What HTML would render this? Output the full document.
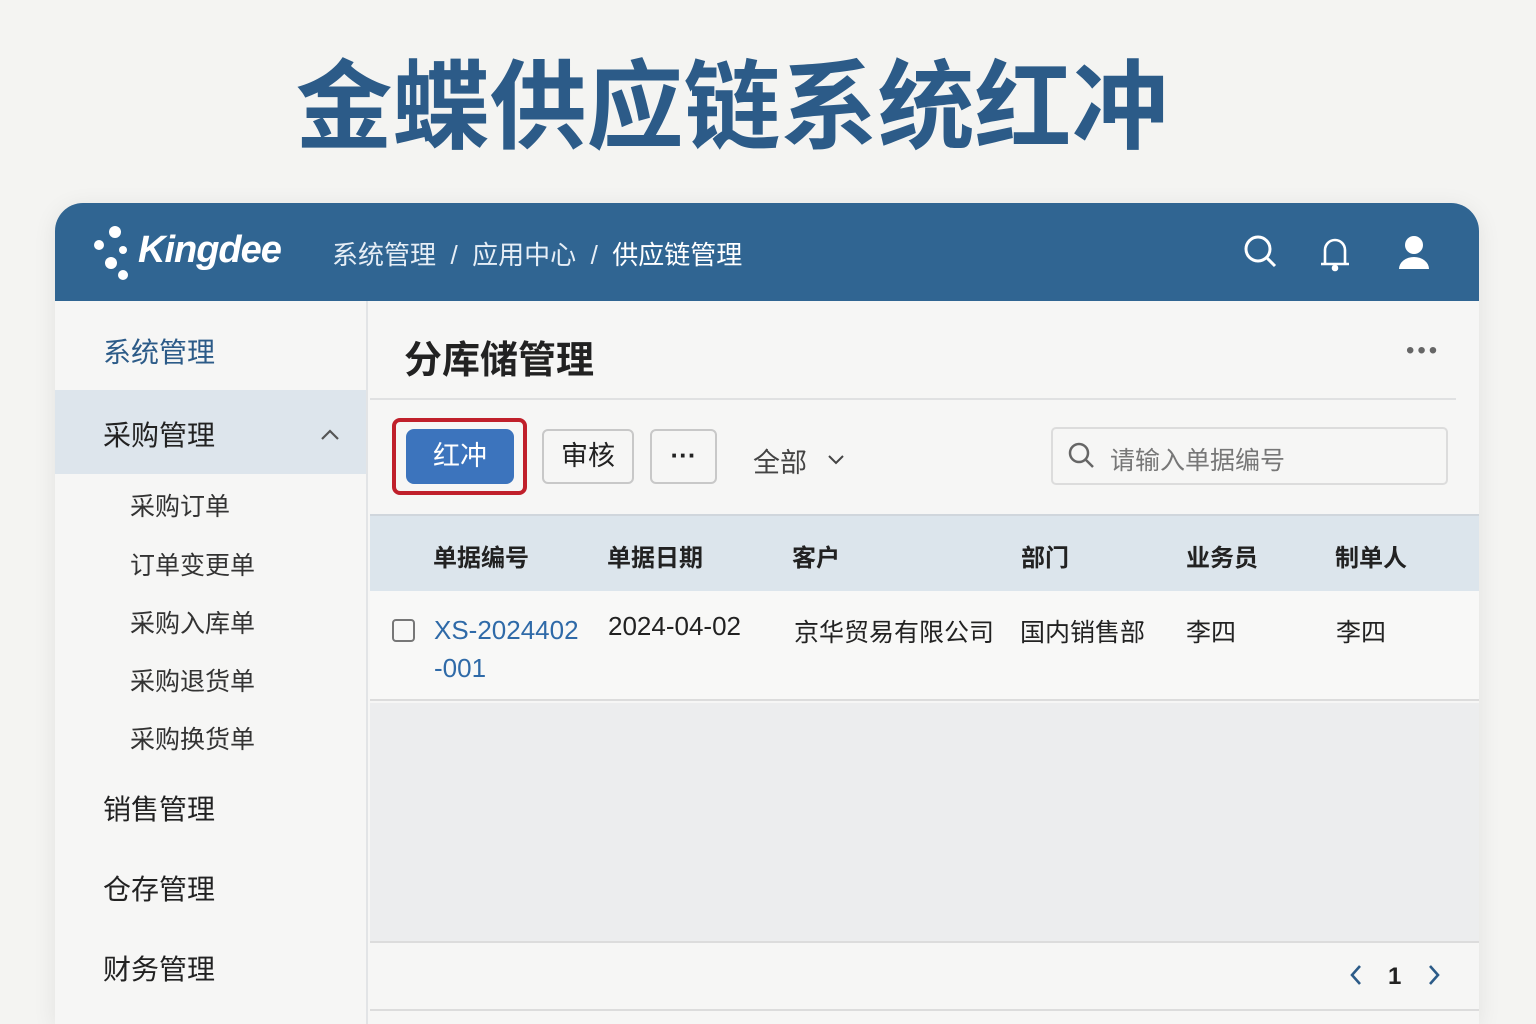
<!DOCTYPE html>
<html><head><meta charset="utf-8"><style>
*{margin:0;padding:0;box-sizing:border-box}
html,body{width:1536px;height:1024px;overflow:hidden}
body{background:#f4f4f2;font-family:"Liberation Sans","Noto Sans CJK SC",sans-serif;position:relative;color:#222}
.abs{position:absolute}
h1{position:absolute;left:0;width:1464px;top:48px;text-align:center;font-size:97px;font-weight:bold;color:#2c5b88;letter-spacing:0;line-height:120px}
.card{left:55px;top:203px;width:1424px;height:821px;border-radius:28px 28px 0 0;background:#f6f6f5;overflow:hidden;box-shadow:0 4px 24px rgba(0,0,0,.08)}
.hdr{left:0;top:0;width:1424px;height:98px;background:#306592;color:#fff}
.side{left:0;top:98px;width:313px;height:730px;background:#f6f6f5;border-right:2px solid #e2e4e6}
.si{position:absolute;left:48px;font-size:28px;color:#222}
.sub{position:absolute;left:75px;font-size:25px;color:#333}
.main{left:315px;top:98px;width:1109px;height:730px}
.th{position:absolute;top:22px;font-size:24px;font-weight:bold;color:#222}
.td{position:absolute;top:22px;font-size:25px;color:#222}
</style></head><body>
<h1>金蝶供应链系统红冲</h1>
<div class="abs card">
 <div class="abs hdr">
  <svg class="abs" style="left:38px;top:20px" width="40" height="60"><circle cx="22" cy="9" r="6" fill="#fff"/><circle cx="6" cy="22" r="5" fill="#fff"/><circle cx="18" cy="40" r="6" fill="#fff"/><circle cx="30" cy="52" r="5" fill="#fff"/><circle cx="30" cy="27" r="4" fill="#fff"/></svg>
  <div class="abs" style="left:83px;top:26px;font-size:38px;font-weight:bold;font-style:italic;letter-spacing:-1px">Kingdee</div>
  <div class="abs" style="left:277px;top:32px;font-size:26px;color:#e6eef6">系统管理 &nbsp;/&nbsp; 应用中心 &nbsp;/&nbsp; <span style="color:#fff">供应链管理</span></div>
  <svg class="abs" style="left:1188px;top:31px" width="36" height="36" fill="none" stroke="#fff" stroke-width="3"><circle cx="15" cy="15" r="12"/><path d="M24 24l8 8"/></svg>
  <svg class="abs" style="left:1264px;top:30px" width="32" height="40" fill="none" stroke="#fff" stroke-width="2.6"><path d="M6 30V17a10 10 0 0 1 20 0v13M2 31h28"/><circle cx="16" cy="35" r="2" fill="#fff"/></svg>
  <svg class="abs" style="left:1342px;top:32px" width="34" height="34" fill="#fff"><circle cx="17" cy="10" r="9"/><path d="M2 34a15 12 0 0 1 30 0z"/></svg>
 </div>
 <div class="abs side">
  <div class="si" style="top:30px;color:#2c5b88">系统管理</div>
  <div class="abs" style="left:0;top:89px;width:311px;height:84px;background:#dde5ec"></div>
  <div class="si" style="top:113px">采购管理</div>
  <svg class="abs" style="left:264px;top:126px" width="22" height="16" fill="none" stroke="#555" stroke-width="2.2"><path d="M3 12l8-8 8 8"/></svg>
  <div class="sub" style="top:186px">采购订单</div>
  <div class="sub" style="top:245px">订单变更单</div>
  <div class="sub" style="top:303px">采购入库单</div>
  <div class="sub" style="top:361px">采购退货单</div>
  <div class="sub" style="top:419px">采购换货单</div>
  <div class="si" style="top:487px">销售管理</div>
  <div class="si" style="top:567px">仓存管理</div>
  <div class="si" style="top:647px">财务管理</div>
 </div>
 <div class="abs main">
  <div class="abs" style="left:34px;top:28px;font-size:38px;font-weight:bold;color:#222">分库储管理</div>
  <div class="abs" style="left:1036px;top:36px;font-size:24px;color:#666;letter-spacing:3px">•••</div>
  <div class="abs" style="left:0;top:97px;width:1086px;height:2px;background:#e0e1e2"></div>
  <div class="abs" style="left:22px;top:117px;width:135px;height:77px;border:4px solid #c0202b;border-radius:8px"></div>
  <div class="abs" style="left:36px;top:128px;width:108px;height:55px;background:#3c74bd;border-radius:8px;color:#fff;font-size:27px;text-align:center;line-height:55px">红冲</div>
  <div class="abs" style="left:172px;top:128px;width:92px;height:55px;border:2px solid #c8c8c8;border-radius:6px;font-size:27px;text-align:center;line-height:51px">审核</div>
  <div class="abs" style="left:280px;top:128px;width:67px;height:55px;border:2px solid #c8c8c8;border-radius:6px;font-size:26px;font-weight:bold;text-align:center;line-height:48px">···</div>
  <div class="abs" style="left:383px;top:140px;font-size:27px;color:#444">全部</div>
  <svg class="abs" style="left:456px;top:152px" width="20" height="14" fill="none" stroke="#444" stroke-width="2"><path d="M3 3l7 7 7-7"/></svg>
  <div class="abs" style="left:681px;top:126px;width:397px;height:58px;border:2px solid #dcdcdc;border-radius:5px"></div>
  <svg class="abs" style="left:698px;top:141px" width="28" height="28" fill="none" stroke="#666" stroke-width="2.5"><circle cx="11" cy="11" r="9"/><path d="M18 18l7 7"/></svg>
  <div class="abs" style="left:740px;top:140px;font-size:25px;color:#777">请输入单据编号</div>
  <div class="abs" style="left:0;top:213px;width:1109px;height:77px;background:#dce5ec;border-top:2px solid #d0d6dc">
   <div class="th" style="left:63px">单据编号</div><div class="th" style="left:237px">单据日期</div><div class="th" style="left:422px">客户</div><div class="th" style="left:651px">部门</div><div class="th" style="left:816px">业务员</div><div class="th" style="left:965px">制单人</div>
  </div>
  <div class="abs" style="left:0;top:290px;width:1109px;height:110px;background:#f8f8f7;border-bottom:2px solid #dcdcdc">
   <div class="abs" style="left:22px;top:28px;width:23px;height:23px;border:2px solid #777;border-radius:4px"></div>
   <div class="td" style="left:64px;color:#2f6aa8;line-height:38px;top:20px;font-size:26px">XS-2024402<br>-001</div>
   <div class="td" style="left:238px;top:20px;font-size:26px">2024-04-02</div>
   <div class="td" style="left:424px;top:22px">京华贸易有限公司</div>
   <div class="td" style="left:650px;top:22px">国内销售部</div>
   <div class="td" style="left:816px;top:22px">李四</div>
   <div class="td" style="left:966px;top:22px">李四</div>
  </div>
  <div class="abs" style="left:0;top:402px;width:1109px;height:238px;background:#ecedee"></div>
  <div class="abs" style="left:0;top:640px;width:1109px;height:70px;background:#f6f6f5;border-top:2px solid #dcdcdc;border-bottom:2px solid #dcdcdc"></div>
  <svg class="abs" style="left:978px;top:662px" width="16" height="24" fill="none" stroke="#2c5b88" stroke-width="2.6"><path d="M12 3l-8 9 8 9"/></svg>
  <div class="abs" style="left:1018px;top:662px;font-size:24px;font-weight:bold;color:#222">1</div>
  <svg class="abs" style="left:1056px;top:662px" width="16" height="24" fill="none" stroke="#2c5b88" stroke-width="2.6"><path d="M4 3l8 9-8 9"/></svg>
 </div>
</div>
</body></html>
